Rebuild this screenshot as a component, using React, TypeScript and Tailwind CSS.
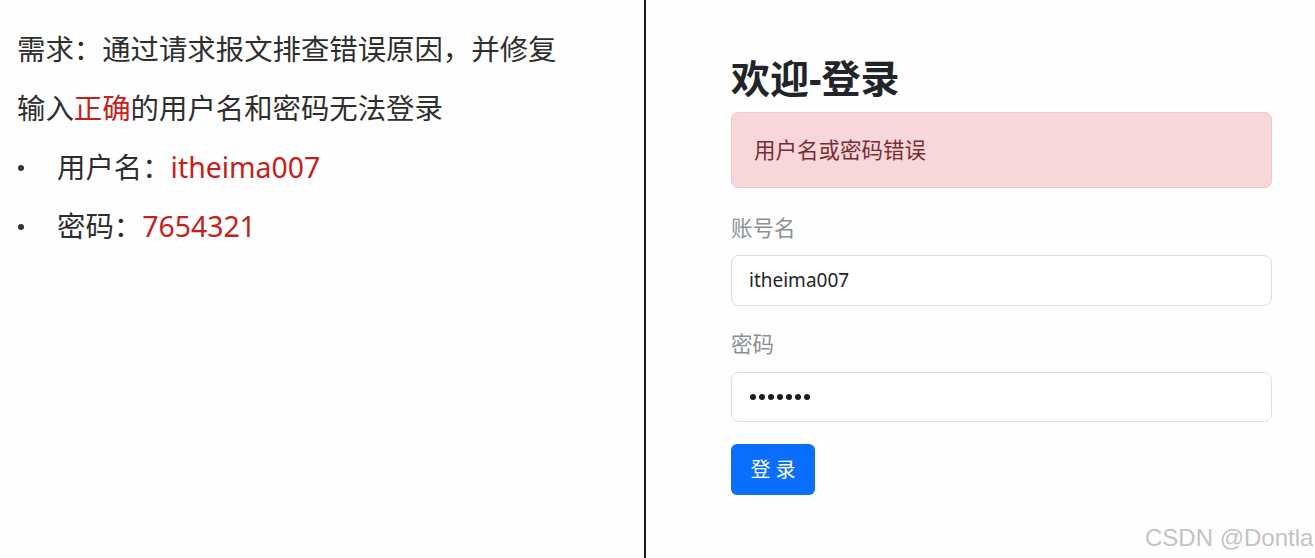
export default function App() {
  return (
    <div
      className="flex h-[558px] w-[1315px] overflow-hidden bg-[#fefefe] relative"
      style={{ fontFamily: '"Noto Sans", "Noto Sans CJK SC", sans-serif' }}
    >
      {/* Left: task description */}
      <div className="w-[644px] shrink-0 pl-[17px] pt-[20px] text-[28.4px] leading-[59px] text-[#2e2e2e]">
        <p>需求：通过请求报文排查错误原因，并修复</p>
        <p>
          输入<span className="text-[#c4211b]">正确</span>的用户名和密码无法登录
        </p>
        <ul>
          <li className="flex items-center">
            <span className="w-[40px] flex items-center">
              <span className="ml-[1px] block h-[6px] w-[6px] rounded-full bg-[#333]" />
            </span>
            <span>
              用户名：<span className="text-[#c4211b]">itheima007</span>
            </span>
          </li>
          <li className="flex items-center">
            <span className="w-[40px] flex items-center">
              <span className="ml-[1px] block h-[6px] w-[6px] rounded-full bg-[#333]" />
            </span>
            <span>
              密码：<span className="text-[#c4211b]">7654321</span>
            </span>
          </li>
        </ul>
      </div>

      {/* Divider */}
      <div className="w-[2px] shrink-0 bg-[#1a1a1a]" />

      {/* Right: login form */}
      <div className="flex-1 pl-[85px] pr-[43px] pt-[55px]">
        <h1 className="text-[39px] font-bold leading-[46px] text-[#212529]">
          欢迎-登录
        </h1>
        <div className="mt-[11px] flex h-[76px] items-center rounded-[7px] border border-[#f5c6cb] bg-[#f8d7da] pl-[22px] text-[21.5px] text-[#7b2a32]">
          用户名或密码错误
        </div>

        <div className="mt-[28px] text-[21.5px] leading-[24px] text-[#8c9094]">
          账号名
        </div>
        <div className="mt-[15px] flex h-[51px] items-center rounded-[8px] border border-[#dcdfe3] bg-white pl-[17px] text-[19px] text-[#212529]">
          itheima007
        </div>

        <div className="mt-[26px] text-[21.5px] leading-[24px] text-[#8c9094]">
          密码
        </div>
        <div className="mt-[16px] flex h-[50px] items-center gap-[3px] rounded-[8px] border border-[#dcdfe3] bg-white pl-[18px]">
          {[0, 1, 2, 3, 4, 5, 6].map((i) => (
            <span key={i} className="block h-[6px] w-[6px] rounded-full bg-[#1b1e21]" />
          ))}
        </div>

        <button className="mt-[22px] flex h-[51px] w-[84px] items-center justify-center rounded-[6px] bg-[#0b6efd] text-[20px] text-white">
          登 录
        </button>
      </div>

      {/* Watermark */}
      <div
        className="absolute left-[1145px] top-[520px] whitespace-nowrap text-[24px] text-[#c4c4c4]"
        style={{ fontFamily: '"Liberation Sans", sans-serif' }}
      >
        CSDN @Dontla
      </div>
    </div>
  );
}
